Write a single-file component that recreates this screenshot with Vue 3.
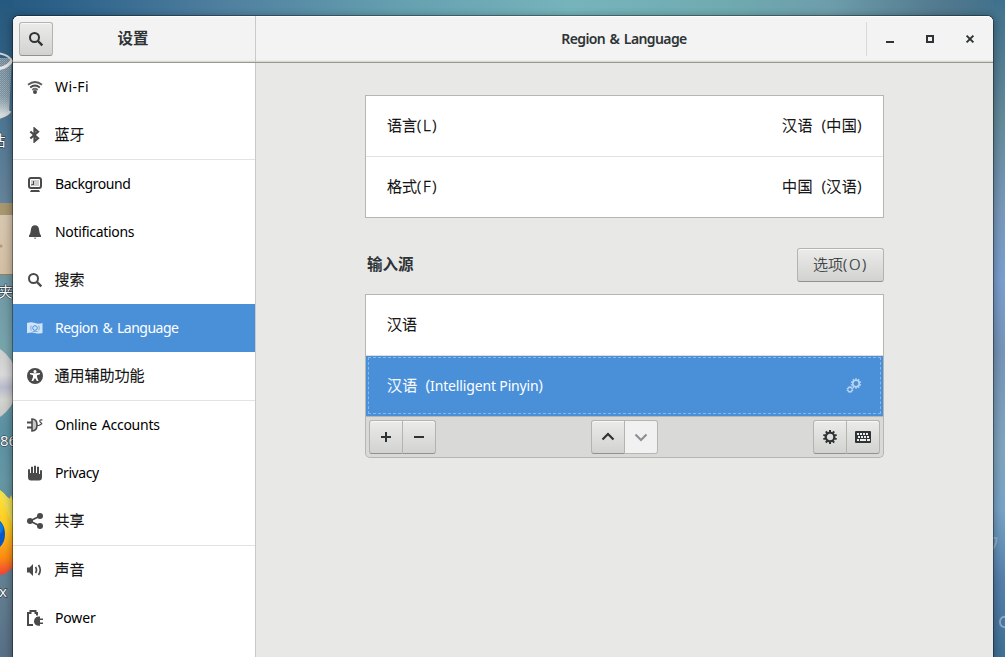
<script setup>
const groups = [
  [
    { icon: 'wifi', label: 'Wi-Fi' },
    { icon: 'bluetooth', label: '蓝牙', cjk: true },
  ],
  [
    { icon: 'background', label: 'Background' },
    { icon: 'bell', label: 'Notifications' },
    { icon: 'search', label: '搜索', cjk: true },
    { icon: 'region', label: 'Region & Language', active: true },
    { icon: 'access', label: '通用辅助功能', cjk: true },
  ],
  [
    { icon: 'online', label: 'Online Accounts' },
    { icon: 'privacy', label: 'Privacy' },
    { icon: 'share', label: '共享', cjk: true },
  ],
  [
    { icon: 'sound', label: '声音', cjk: true },
    { icon: 'power', label: 'Power' },
  ],
]
const locale = [
  { name: '语言', key: '(L)', value: '汉语 (中国)' },
  { name: '格式', key: '(F)', value: '中国 (汉语)' },
]
const gear = Array.from({ length: 10 }, (_, i) => i * 36)
</script>

<template>
  <div class="desktop">
    <div class="strip left"></div>
    <div class="strip right"></div>
    <svg class="art" width="1005" height="657" viewBox="0 0 1005 657">
      <defs>
        <pattern id="mesh" width="2" height="2" patternUnits="userSpaceOnUse">
          <rect width="2" height="2" fill="#71899a" />
          <rect width="1" height="1" fill="#94a8b4" />
          <rect x="1" y="1" width="1" height="1" fill="#879dab" />
        </pattern>
        <linearGradient id="trash" x1="0" y1="0" x2="0" y2="1">
          <stop offset="0" stop-color="#8fa2ad" stop-opacity="0" />
          <stop offset=".65" stop-color="#b9c3c8" stop-opacity=".2" />
          <stop offset="1" stop-color="#e4e7e6" />
        </linearGradient>
        <linearGradient id="folder" x1="0" y1="0" x2="0" y2="1">
          <stop offset="0" stop-color="#d8c7b0" />
          <stop offset="1" stop-color="#d3bfa3" />
        </linearGradient>
        <linearGradient id="disc" x1="0" y1="0" x2="0" y2="1">
          <stop offset="0" stop-color="#c9c9c9" />
          <stop offset=".4" stop-color="#dadadb" />
          <stop offset=".55" stop-color="#b9bccc" />
          <stop offset=".7" stop-color="#d4d4d0" />
          <stop offset="1" stop-color="#c2c2c0" />
        </linearGradient>
        <linearGradient id="fox" x1="0" y1="0" x2="0" y2="1">
          <stop offset="0" stop-color="#ffe23e" />
          <stop offset=".45" stop-color="#ffcb1f" />
          <stop offset=".8" stop-color="#ff8a12" />
          <stop offset="1" stop-color="#f0413a" />
        </linearGradient>
      </defs>
      <path d="M-8 58H12L9 112Q3 117-8 117Z" fill="url(#mesh)" />
      <path d="M-8 58H12L9 112Q3 117-8 117Z" fill="url(#trash)" />
      <path d="M-4 53Q8 54 12 61" fill="none" stroke="#d4d4d2" stroke-width="2" />
      <path d="M-4 69Q8 68 12 60" fill="none" stroke="#e6e6e5" stroke-width="3" />
      <path d="M-4 118Q7 116 10 111" fill="none" stroke="#d8d8d7" stroke-width="3" />
      <rect y="203" width="13" height="12" fill="#a8976f" />
      <rect y="215" width="13" height="59" fill="url(#folder)" />
      <rect y="274" width="13" height="1" fill="#9b805c" />
      <circle cx="1" cy="246" r="1.5" fill="#ae987b" />
      <circle cx="-23" cy="383" r="41" fill="url(#disc)" />
      <path d="M0 490Q7 495 9 501L11 495L13 501V567Q6 575 0 575Z" fill="url(#fox)" />
      <path d="M0 494Q5 508 13 526V501Q7 497 0 491Z" fill="#f0df50" />
      <ellipse cx="-5" cy="534" rx="10" ry="15" fill="#0758c6" />
      <ellipse cx="-6" cy="528" rx="9" ry="8" fill="#0b7be4" />
      <g class="desk-text">
        <text x="-9.500" y="146">站</text>
        <text x="-2" y="297">夹</text>
        <text x="0" y="446">86</text>
        <text x="-1" y="597">x</text>
      </g>
      <path d="M993 538h3.500q0 6-3.500 11" fill="none" stroke="#a5bdd5" stroke-width="2" opacity=".7" />
      <path d="M1007 617q-7-1-7 5t7 5" fill="none" stroke="#a5bdd5" stroke-width="2" opacity=".7" />
    </svg>

    <svg class="defs" width="0" height="0">
      <symbol id="i-wifi" viewBox="0 0 16 16">
        <g fill="none" stroke="currentColor" stroke-width="1.800">
          <path d="M1 5.800Q8 .3 15 5.800" opacity=".9" />
          <path d="M3.200 8.500Q8 4.600 12.800 8.500" />
          <path d="M5.300 11Q8 8.600 10.700 11" opacity=".8" />
        </g>
        <circle cx="8" cy="13" r="2" fill="currentColor" />
      </symbol>
      <symbol id="i-bluetooth" viewBox="0 0 16 16">
        <path d="M3.300 4.500L11 11.200L7.500 14.300V1.700L11 4.800L3.300 11.500" fill="none" stroke="currentColor" stroke-width="2.200" />
      </symbol>
      <symbol id="i-background" viewBox="0 0 16 16">
        <rect x="2" y="2" width="12" height="10" rx="2" fill="none" stroke="currentColor" stroke-width="2" />
        <rect x="4" y="4" width="8" height="6" fill="currentColor" opacity=".28" />
        <path d="M4 10V8.500L6 8V5H7V9H4.500Z" fill="currentColor" />
        <path d="M4 14h8l1 2H3Z" fill="currentColor" />
      </symbol>
      <symbol id="i-bell" viewBox="0 0 16 16">
        <path d="M8 1.200Q11.500 1.200 12 5Q12.500 10 14 11.500V13H2V11.500Q3.500 10 4 5Q4.500 1.200 8 1.200ZM6.500 13.700H9.500Q9 14.700 8 14.700Z" fill="currentColor" />
      </symbol>
      <symbol id="i-search" viewBox="0 0 16 16">
        <circle cx="6.500" cy="6.500" r="4.500" fill="none" stroke="currentColor" stroke-width="2" />
        <path d="M10 10L14.300 14.300" stroke="currentColor" stroke-width="2.400" />
      </symbol>
      <symbol id="i-region" viewBox="0 0 16 16">
        <path d="M0 3Q4 1.500 8 3T15.500 3V13Q11 14 8 13T0 13.200Z" fill="currentColor" opacity=".75" />
        <circle cx="8" cy="8" r="2.300" fill="none" stroke="#4a90d9" stroke-width="1" />
        <path d="M4.300 5.500Q3 8 4.300 10.500M11.700 5.500Q13 8 11.700 10.500M5.500 11.500H10.500" fill="none" stroke="#4a90d9" stroke-width=".8" opacity=".8" />
      </symbol>
      <symbol id="i-access" viewBox="0 0 16 16">
        <circle cx="8" cy="8" r="8" fill="currentColor" />
        <circle cx="8" cy="3.500" r="1.500" fill="#fff" />
        <path d="M3 5L7 5.300H9L13 5L13 6.300L10 7.200V9L11.500 13H9.900L8 10L6.100 13H4.500L6 9V7.200L3 6.300Z" fill="#fff" />
      </symbol>
      <symbol id="i-online" viewBox="0 0 16 16">
        <path d="M0 5.500H5M0 10.500H5" stroke="currentColor" stroke-width="1.800" />
        <path d="M5 2Q10 2 10 8T5 14Z" fill="currentColor" fill-opacity=".3" stroke="currentColor" stroke-width="1.600" />
        <path d="M10 8.500H12.300M15.500 3Q12.800 2.600 12.800 4T14.300 6T12.300 8.300" fill="none" stroke="currentColor" stroke-width="1.200" />
      </symbol>
      <symbol id="i-privacy" viewBox="0 0 16 16">
        <path d="M1 4.500Q2 3.500 3 4.500V8H4V2Q5 1 6 2V8H7V1Q8 0 9 1V8H10V2Q11 1 12 2V9H13V5.500Q14 4.500 15 5.500V12Q15 15.500 12 15.500H4Q1 15.500 1 12Z" fill="currentColor" />
      </symbol>
      <symbol id="i-share" viewBox="0 0 16 16">
        <path d="M13 3L3 8L13 13" fill="none" stroke="currentColor" stroke-width="1.800" />
        <g fill="currentColor"><circle cx="13" cy="3" r="3" /><circle cx="3" cy="8" r="3" /><circle cx="13" cy="13" r="3" /></g>
      </symbol>
      <symbol id="i-sound" viewBox="0 0 16 16">
        <path d="M0 5.500H2.500L6 2V14L2.500 10.500H0Z" fill="currentColor" />
        <path d="M8.500 5Q10.500 8 8.500 11M11.500 3Q15 8 11.500 13" fill="none" stroke="currentColor" stroke-width="1.700" />
      </symbol>
      <symbol id="i-power" viewBox="0 0 16 16">
        <path d="M6 15H1V3H3.500V1H8.500V3H10V5.500" fill="none" stroke="currentColor" stroke-width="2" />
        <path d="M7 11Q7.500 7 11 6.500H13V8.500H16V10H13V12.500H16V14H13V15.700H11Q7.500 15 7 12Z" fill="currentColor" />
      </symbol>
      <symbol id="i-gear" viewBox="0 0 16 16">
        <circle cx="8" cy="8" r="4.300" fill="none" stroke="currentColor" stroke-width="2.200" />
        <rect v-for="a in gear" :key="a" x="7" y="1" width="2" height="2.600" fill="currentColor" :transform="`rotate(${a} 8 8)`" />
      </symbol>
    </svg>

    <main class="window">
      <header class="titlebar">
        <div class="side-head">
          <button class="btn find"><svg class="ico"><use href="#i-search" /></svg></button>
          <b class="app-title">设置</b>
        </div>
        <div class="main-head">
          <b class="page-title">Region &amp; Language</b>
          <div class="controls">
            <svg width="16" height="16"><path d="M4 10h8v2H4z" /></svg>
            <svg width="16" height="16"><path d="M4 4h8v8H4zM6 6v4h4V6z" fill-rule="evenodd" /></svg>
            <svg width="16" height="16"><path d="M4.600 4.600L11.400 11.400M11.400 4.600L4.600 11.400" stroke="#2e3436" stroke-width="2" /></svg>
          </div>
        </div>
      </header>

      <div class="body">
        <nav class="sidebar">
          <div v-for="(g, gi) in groups" :key="gi" class="group">
            <div v-for="it in g" :key="it.label" class="nav" :class="{ active: it.active, cjk: it.cjk }">
              <svg class="ico"><use :href="'#i-' + it.icon" /></svg>
              <span :class="'t-' + it.icon">{{ it.label }}</span>
            </div>
          </div>
        </nav>

        <section class="content">
          <div class="list">
            <div v-for="l in locale" :key="l.name" class="row">
              <span>{{ l.name }}<span class="key">{{ l.key }}</span></span><span class="val">{{ l.value }}</span>
            </div>
          </div>
          <div class="section-head">
            <b>输入源</b>
            <button class="btn options"><span>选项<span class="key">(O)</span></span></button>
          </div>
          <div class="list sources">
            <div class="row">汉语</div>
            <div class="row picked">
              <span class="val">汉语 (<span class="latin">Intelligent Pinyin</span>)</span>
              <svg class="gears" width="16" height="16">
                <use href="#i-gear" x="4" y="-.5" width="12" height="12" />
                <use href="#i-gear" x="0" y="7.500" width="8" height="8" />
              </svg>
            </div>
          </div>
          <div class="toolbar">
            <div class="pair">
              <button class="btn"><svg class="ico"><path d="M3 7h4V3h2v4h4v2H9v4H7V9H3z" fill="currentColor" /></svg></button>
              <button class="btn"><svg class="ico"><path d="M3 7h10v2H3z" fill="currentColor" /></svg></button>
            </div>
            <div class="pair">
              <button class="btn"><svg class="ico"><path d="M2.500 10.500L8 5L13.500 10.500" fill="none" stroke="currentColor" stroke-width="2.200" /></svg></button>
              <button class="btn off"><svg class="ico"><path d="M2.500 5.500L8 11L13.500 5.500" fill="none" stroke="currentColor" stroke-width="2.200" /></svg></button>
            </div>
            <div class="pair">
              <button class="btn"><svg class="ico"><use href="#i-gear" /></svg></button>
              <button class="btn">
                <svg class="ico">
                  <rect y="2" width="16" height="12" rx="1" fill="currentColor" />
                  <path d="M2 5h12M3 8h11" stroke="#eee" stroke-width="2" stroke-dasharray="2 1" />
                  <path d="M2 11h2M5 11h6M12 11h3" stroke="#eee" stroke-width="2" />
                </svg>
              </button>
            </div>
          </div>
        </section>
      </div>
    </main>
  </div>
</template>

<style>
html, body { margin: 0; overflow: hidden; }
</style>

<style scoped>
.desktop {
  position: relative;
  box-sizing: border-box;
  width: 1005px;
  height: 657px;
  padding: 16px 12px 0 13px;
  overflow: hidden;
  background: linear-gradient(90deg, #26597f 0, #2c6189 60px, #4f7f9f 220px, #65a0b0 400px, #76b4bc 570px, #6faab0 730px, #6d9dab 830px, #52798e 940px, #40718c 1005px);
  font-family: "Noto Sans", "Noto Sans CJK SC", sans-serif;
  font-size: 14px;
  color: #000;
}
.strip { position: absolute; top: 0; bottom: 0; }
.left { left: 0; width: 13px; background: linear-gradient(#26597f 0, #315f82 60px, #4b7592 110px, #607f98 180px, #6f98a5 280px, #78a5ac 350px, #5b91a3 430px, #6597a5 480px, #627e90 590px, #587086 657px); }
.right { right: 0; width: 12px; background: linear-gradient(#40718c 0, #557f95 70px, #638b9b 120px, #7899bb 210px, #7a9fd0 280px, #7695b9 350px, #7fa5bf 450px, #78a4c8 510px, #5580ac 580px, #3f7095 657px); }
.art { position: absolute; left: 0; top: 0; }
.defs { position: absolute; }
.desk-text { fill: #fff; font-size: 15px; paint-order: stroke; stroke: #1b2730; stroke-width: 1px; }
.window {
  position: relative;
  height: 641px;
  border-radius: 6px 6px 0 0;
  background: #e8e8e7;
  box-shadow: 0 0 0 1px rgba(0, 0, 0, .35), 0 2px 8px 2px rgba(0, 0, 0, .3);
}
.titlebar {
  box-sizing: border-box;
  display: flex;
  height: 47px;
  border-bottom: 1px solid #989890;
  border-radius: 6px 6px 0 0;
  background: #f3f3f3;
  box-shadow: inset 0 1px #fff, inset 0 -1px #d9d9d7, inset 0 -2px #ececeb;
  color: #2e3436;
}
.side-head {
  box-sizing: border-box;
  flex: none;
  width: 243px;
  display: flex;
  align-items: center;
  border-right: 1px solid #c9c9c7;
  padding-left: 6px;
}
.app-title { width: 160px; padding-bottom: 2px; text-align: center; font-size: 15.500px; line-height: 20px; }
.main-head { flex: 1; min-width: 0; display: flex; align-items: center; }
.page-title { flex: 1; padding: 0 0 0 126px; text-align: center; font-weight: 600; font-size: 14px; letter-spacing: -.6px; word-spacing: 1.400px; line-height: 20px; }
.controls {
  display: flex;
  gap: 24px;
  align-items: center;
  height: 34px;
  padding: 0 15px;
  border-left: 1px solid #d9d9d9;
  fill: #2e3436;
}
.btn {
  box-sizing: border-box;
  display: flex;
  align-items: center;
  justify-content: center;
  width: 34px;
  height: 34px;
  padding: 0;
  border: 1px solid #b4b4af;
  border-bottom-color: #929289;
  border-radius: 3px;
  background: linear-gradient(#ebebea, #d2d2d0);
  box-shadow: inset 0 1px #f8f8f8;
  color: #2e3436;
  font: inherit;
}
.ico { width: 16px; height: 16px; display: block; flex: none; }
.body { display: flex; height: 594px; }
.sidebar { box-sizing: border-box; flex: none; width: 243px; background: #fff; border-right: 1px solid #c9c9c7; overflow: hidden; }
.group + .group { border-top: 1px solid #e2e2e2; }
.nav { display: flex; align-items: center; gap: 12px; height: 48px; padding-left: 14px; color: #4a4a4a; }
.nav span { color: #000; white-space: nowrap; line-height: 20px; letter-spacing: -.32px; }
.nav.cjk span { font-size: 15px; font-weight: 300; letter-spacing: 0; padding-bottom: 2px; margin-left: -.5px; -webkit-text-stroke: .3px; }
.nav .t-wifi { letter-spacing: .4px; }
.nav .t-background { letter-spacing: -.42px; }
.nav .t-region { letter-spacing: -.5px; word-spacing: 1.500px; }
.nav .t-online { letter-spacing: -.25px; word-spacing: 1.500px; }
.nav .t-privacy { letter-spacing: -.42px; }
.nav .t-power { letter-spacing: -.15px; }
.nav.active { background: #4a90d9; color: #fff; }
.nav.active span { color: #fff; }
.content { flex: 1; min-width: 0; display: flex; flex-direction: column; padding: 32px 109px 0; }
.list { border: 1px solid #b6b6b3; background: #fff; font-size: 15px; font-weight: 300; -webkit-text-stroke: .3px; }
.row { box-sizing: border-box; display: flex; align-items: center; justify-content: space-between; height: 60px; padding: 0 21px 4px; }
.row + .row { height: 61px; border-top: 1px solid #e2e2e2; }
.key { letter-spacing: 1.700px; }
.val { word-spacing: 4.200px; letter-spacing: .5px; }
.section-head { display: flex; align-items: center; justify-content: space-between; height: 34px; margin: 30px 0 12px; color: #2e3436; font-size: 15.500px; padding-left: 2px; }
.section-head b { padding-bottom: 4px; }
.options { width: 87px; font-size: 15px; font-weight: 300; padding-bottom: 4px; -webkit-text-stroke: .2px; }
.sources .row.picked { border-top-color: #ddd; background: #4a90d9; color: #fff; outline: 1px dashed #8ab7e6; outline-offset: -3px; }
.picked .val { letter-spacing: .2px; }
.latin { font-size: 14px; font-weight: 400; word-spacing: 0; letter-spacing: -.15px; -webkit-text-stroke: 0; }
.gears { color: #b9d5f1; margin: 3px 0 0 0; }
.toolbar { box-sizing: border-box; display: flex; justify-content: space-between; height: 41px; padding: 3px; border: 1px solid #b6b6b3; border-top: 0; border-radius: 0 0 5px 5px; background: #d9d9d7; }
.pair { display: flex; }
.pair .btn:first-child { border-radius: 3px 0 0 3px; }
.pair .btn:last-child { width: 33px; border-left: 0; border-radius: 0 3px 3px 0; }
.pair .off { background: #f1f1f1; border-color: #b6b6b3; color: #8d9091; box-shadow: none; }
</style>
